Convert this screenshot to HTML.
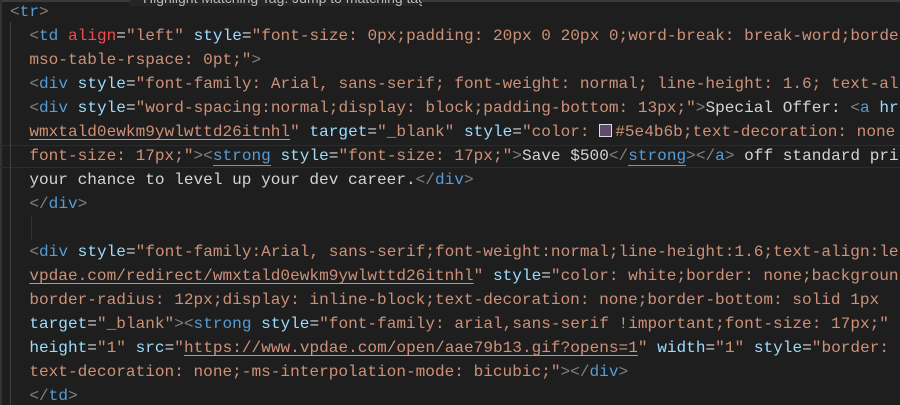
<!DOCTYPE html>
<html><head><style>
html,body{margin:0;padding:0;background:#1e1e1e;width:900px;height:405px;overflow:hidden;position:relative}
pre{margin:0;position:absolute;left:10px;top:0;font-family:"Liberation Mono",monospace;font-size:16.1px;line-height:24px;color:#d4d4d4;white-space:pre}
.p{color:#808080}.t{color:#569cd6}.a{color:#9cdcfe}.r{color:#f14c4c}.s{color:#ce9178}.w{color:#d4d4d4}
.u{text-decoration:underline;text-decoration-color:#ce9178;text-underline-offset:3px}
.y{border-bottom:1px solid #a0a020}
.sw{display:inline-block;width:11px;height:11px;border:1px solid #ddd;background:#5e4b6b;vertical-align:-1px;margin-right:3px}
.tip{position:absolute;left:130px;top:0;width:292px;height:6px;background:#252526;overflow:hidden}
.tip span{position:absolute;left:13px;top:-10px;font-family:"Liberation Sans",sans-serif;font-size:14px;color:#bbb;white-space:nowrap}
.g{position:absolute;width:1px;background:#404040}
.cl{position:absolute;left:0;top:145px;width:900px;height:21px;border-top:1px solid #2c2c2c;border-bottom:1px solid #2c2c2c}
</style></head><body>
<div style="position:absolute;left:0;top:0;width:900px;height:2px;background:#3a3a3a"></div>
<div style="position:absolute;left:0;top:0;width:2px;height:405px;background:#333"></div>
<div class="cl"></div>
<div class="g" style="left:10px;top:22px;height:383px"></div>
<div class="g" style="left:31px;top:216px;height:24px;background:#333"></div>
<pre><span class="p">&lt;</span><span class="t">tr</span><span class="p">&gt;</span>
  <span class="p">&lt;</span><span class="t">td</span> <span class="r">align</span>=<span class="s">"left"</span> <span class="a">style</span>=<span class="s">"font-size: 0px;padding: 20px 0 20px 0;word-break: break-word;border</span>
  <span class="s">mso-table-rspace: 0pt;"</span><span class="p">&gt;</span>
  <span class="p">&lt;</span><span class="t">div</span> <span class="a">style</span>=<span class="s">"font-family: Arial, sans-serif; font-weight: normal; line-height: 1.6; text-al</span>
  <span class="p">&lt;</span><span class="t">div</span> <span class="a">style</span>=<span class="s">"word-spacing:normal;display: block;padding-bottom: 13px;"</span><span class="p">&gt;</span>Special Offer: <span class="p">&lt;</span><span class="t">a</span> <span class="a">hr</span>
  <span class="s"><span class="u">wmxtald0ewkm9ywlwttd26itnhl</span>"</span> <span class="a">target</span>=<span class="s">"_blank"</span> <span class="a">style</span>=<span class="s">"color: <span class="sw"></span>#5e4b6b;text-decoration: none</span>
  <span class="s">font-size: 17px;"</span><span class="p">&gt;&lt;</span><span class="t y">strong</span> <span class="a">style</span>=<span class="s">"font-size: 17px;"</span><span class="p">&gt;</span>Save $500<span class="p">&lt;/</span><span class="t y">strong</span><span class="p">&gt;&lt;/</span><span class="t">a</span><span class="p">&gt;</span> off standard pri
  your chance to level up your dev career.<span class="p">&lt;/</span><span class="t">div</span><span class="p">&gt;</span>
  <span class="p">&lt;/</span><span class="t">div</span><span class="p">&gt;</span>

  <span class="p">&lt;</span><span class="t">div</span> <span class="a">style</span>=<span class="s">"font-family:Arial, sans-serif;font-weight:normal;line-height:1.6;text-align:le</span>
  <span class="s"><span class="u">vpdae.com/redirect/wmxtald0ewkm9ywlwttd26itnhl</span>"</span> <span class="a">style</span>=<span class="s">"color: white;border: none;backgroun</span>
  <span class="s">border-radius: 12px;display: inline-block;text-decoration: none;border-bottom: solid 1px</span>
  <span class="a">target</span>=<span class="s">"_blank"</span><span class="p">&gt;&lt;</span><span class="t">strong</span> <span class="a">style</span>=<span class="s">"font-family: arial,sans-serif !important;font-size: 17px;"</span>
  <span class="a">height</span>=<span class="s">"1"</span> <span class="a">src</span>=<span class="s">"<span class="u">https://www.vpdae.com/open/aae79b13.gif?opens=1</span>"</span> <span class="a">width</span>=<span class="s">"1"</span> <span class="a">style</span>=<span class="s">"border: </span>
  <span class="s">text-decoration: none;-ms-interpolation-mode: bicubic;"</span><span class="p">&gt;&lt;/</span><span class="t">div</span><span class="p">&gt;</span>
  <span class="p">&lt;/</span><span class="t">td</span><span class="p">&gt;</span></pre>
<div class="tip"><span>Highlight Matching Tag: Jump to matching tag</span></div>
</body></html>
